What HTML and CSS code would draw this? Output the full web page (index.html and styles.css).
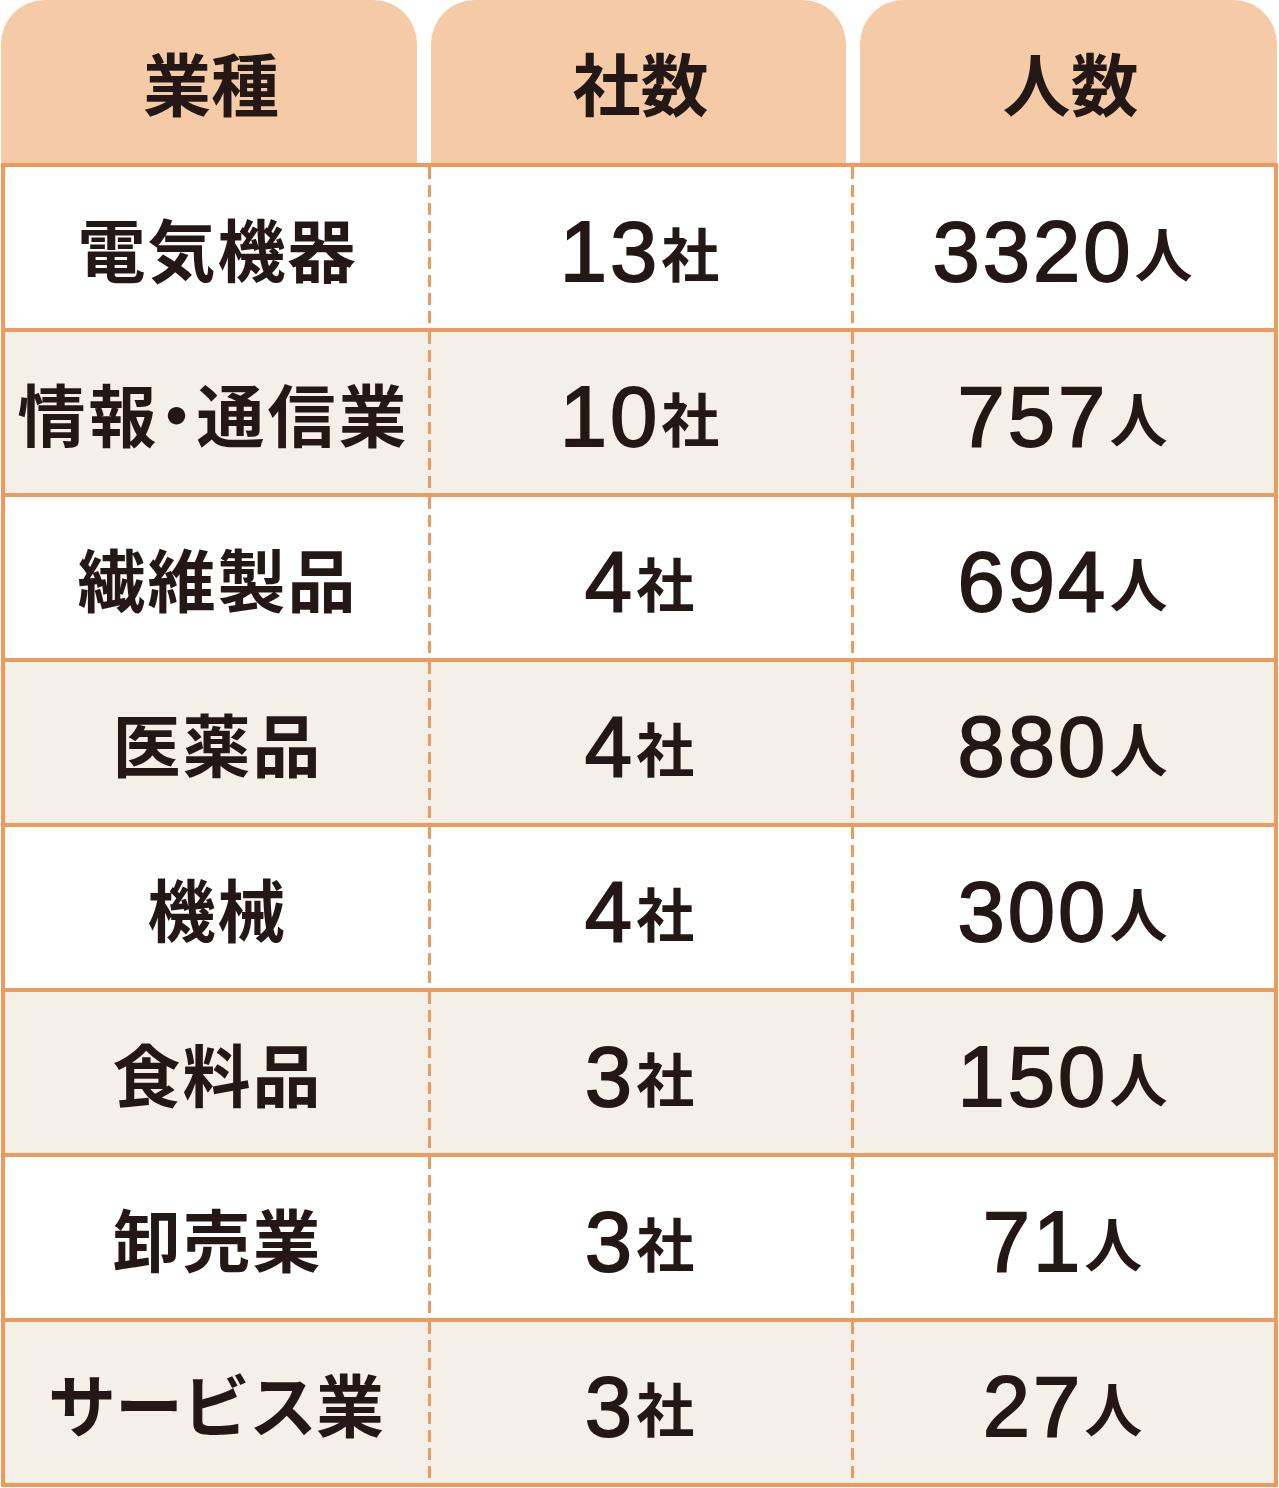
FILE: index.html
```html
<!DOCTYPE html>
<html lang="ja">
<head>
<meta charset="utf-8">
<title>業種別 社数・人数</title>
<link rel="stylesheet" href="styles.css">
</head>
<body>
<div class="table">
  <div class="head">
    <div class="th">業種</div>
    <div class="th">社数</div>
    <div class="th">人数</div>
  </div>
  <div class="tbody">
    <div class="row">
      <div class="cell name">電気機器</div>
      <div class="cell num">13<span class="unit">社</span></div>
      <div class="cell num">3320<span class="unit">人</span></div>
    </div>
    <div class="row">
      <div class="cell name tight">情報・通信業</div>
      <div class="cell num">10<span class="unit">社</span></div>
      <div class="cell num">757<span class="unit">人</span></div>
    </div>
    <div class="row">
      <div class="cell name">繊維製品</div>
      <div class="cell num">4<span class="unit">社</span></div>
      <div class="cell num">694<span class="unit">人</span></div>
    </div>
    <div class="row">
      <div class="cell name">医薬品</div>
      <div class="cell num">4<span class="unit">社</span></div>
      <div class="cell num">880<span class="unit">人</span></div>
    </div>
    <div class="row">
      <div class="cell name">機械</div>
      <div class="cell num">4<span class="unit">社</span></div>
      <div class="cell num">300<span class="unit">人</span></div>
    </div>
    <div class="row">
      <div class="cell name">食料品</div>
      <div class="cell num">3<span class="unit">社</span></div>
      <div class="cell num">150<span class="unit">人</span></div>
    </div>
    <div class="row">
      <div class="cell name">卸売業</div>
      <div class="cell num">3<span class="unit">社</span></div>
      <div class="cell num">71<span class="unit">人</span></div>
    </div>
    <div class="row">
      <div class="cell name kana">サービス業</div>
      <div class="cell num">3<span class="unit">社</span></div>
      <div class="cell num">27<span class="unit">人</span></div>
    </div>
  </div>
</div>
</body>
</html>
```

FILE: styles.css
```css
html, body {
  margin: 0;
  padding: 0;
  background: #ffffff;
}

.table {
  width: 1277px;
  margin-left: 1px;
  color: #231815;
  font-family: "Noto Sans CJK JP", "Noto Sans", sans-serif;
  font-weight: 700;
}

.head {
  display: grid;
  grid-template-columns: 416px 415px 417px;
  column-gap: 14px;
}

.th {
  height: 163px;
  background: #f5cba7;
  border-radius: 44px 44px 0 0;
  display: flex;
  align-items: center;
  justify-content: center;
  font-size: 68px;
  line-height: 1;
  padding-left: 4px;
}

.tbody {
  border: 4px solid #ec9a5e;
}

.row {
  display: grid;
  grid-template-columns: 1fr 1fr 1fr;
  height: 161px;
  background: #ffffff;
}

.row + .row {
  border-top: 4px solid #ec9a5e;
}

.row:nth-child(even) {
  background: #f4f0e7;
}

.cell {
  display: flex;
  align-items: center;
  justify-content: center;
  line-height: 1;
  white-space: nowrap;
}

.cell + .cell {
  background-image: repeating-linear-gradient(to bottom, #ec9a5e 0 12px, transparent 12px 18px);
  background-size: 3px 100%;
  background-repeat: no-repeat;
  background-position: left top;
}

.name {
  font-size: 68px;
  letter-spacing: 2px;
  padding-left: 2px;
}

.name.tight {
  font-feature-settings: "halt" 1;
  letter-spacing: 3px;
  padding-left: 0;
  padding-right: 6px;
}

.name.kana {
  letter-spacing: -1px;
  padding-right: 4px;
}

.num {
  font-family: "Liberation Sans", Arial, sans-serif;
  font-weight: 400;
  -webkit-text-stroke: 1.8px #231815;
  font-size: 85px;
  letter-spacing: 3px;
  padding-top: 8px;
}

.unit {
  font-family: "Noto Sans CJK JP", sans-serif;
  font-weight: 700;
  -webkit-text-stroke: 0;
  font-size: 58px;
  letter-spacing: 0;
  line-height: 1;
  vertical-align: 5px;
  margin-left: 1px;
}
```
